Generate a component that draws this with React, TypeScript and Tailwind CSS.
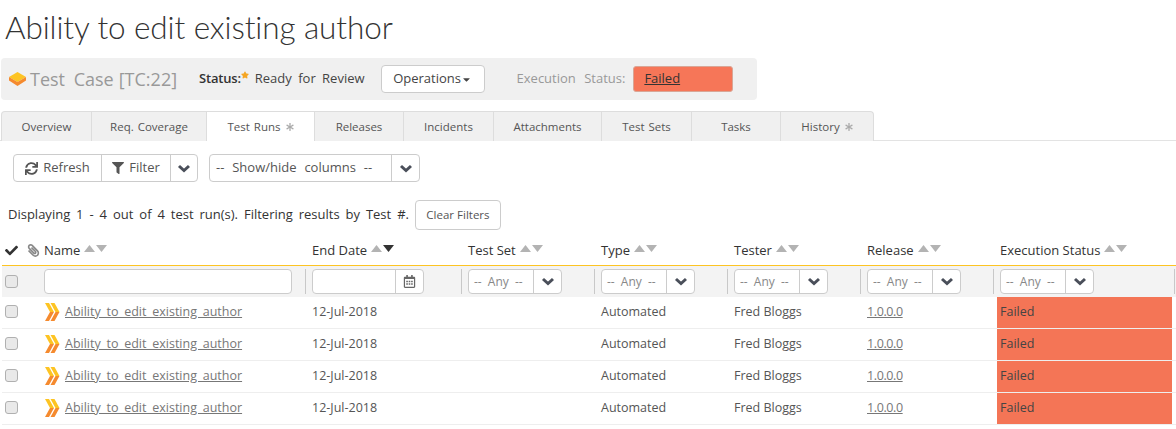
import React from "react";
import { FaSync, FaFilter, FaCheck, FaPaperclip, FaRegCalendarAlt, FaAsterisk, FaStar, FaCaretDown } from "react-icons/fa";

const tabs = [
  { label: "Overview", w: "w-[91px]" },
  { label: "Req. Coverage", w: "w-[115px]" },
  { label: "Test Runs", w: "w-[108px]", active: true, mark: true },
  { label: "Releases", w: "w-[89px]" },
  { label: "Incidents", w: "w-[90px]" },
  { label: "Attachments", w: "w-[108px]" },
  { label: "Test Sets", w: "w-[90px]" },
  { label: "Tasks", w: "w-[89px]" },
  { label: "History", w: "w-[93px]", mark: true },
];

const gridCols = "grid grid-cols-[22px_17px_268px_156px_133px_133px_133px_133px_175px_1fr]";

function SortArrows({ active }: { active?: boolean }) {
  return (
    <svg width="23" height="7" viewBox="0 0 23 7" className="ml-[4px] mb-[4px]">
      <path d="M0 7 L5.5 0 L11 7 Z" fill="#b3b3b3" />
      <path d="M12 0 L23 0 L17.5 7 Z" fill={active ? "#333333" : "#b3b3b3"} />
    </svg>
  );
}

function HeadCell({ label, active }: { label: string; active?: boolean }) {
  return (
    <div className="flex items-center pl-[3px] pt-[1px]">
      <span>{label}</span>
      <SortArrows active={active} />
    </div>
  );
}

function CheckBox() {
  return <div className="ml-[3px] w-[13px] h-[13px] rounded-[3px] border border-[#b0b0b0] bg-[#e9e9e9]" />;
}

function Chevron() {
  return (
    <svg width="14" height="9" viewBox="0 0 14 9">
      <path d="M2 2 L7 6.5 L12 2" fill="none" stroke="#4a4f5a" strokeWidth="3" />
    </svg>
  );
}

function AnySelect() {
  return (
    <div className="flex items-center h-full">
      <div className="-ml-[4px] mr-[6px] w-px h-[25px] bg-[#c8c8c8]" />
      <div className="flex w-[94px] h-[25px] bg-white border border-[#ccc] rounded-[4px] text-[12px] text-[#888]">
        <div className="flex-1 flex items-center pl-[5px] whitespace-nowrap [word-spacing:3px]">-- Any --</div>
        <div className="w-[28px] border-l border-[#ccc] flex items-center justify-center">
          <Chevron />
        </div>
      </div>
    </div>
  );
}

function ChevronIcon() {
  return (
    <svg width="15" height="18" viewBox="0 0 15 18" className="shrink-0">
      <path d="M0 0 H4 L9 9 H5 Z" fill="#fdc423" />
      <path d="M5.5 0 H9.5 L14.5 9 H10.5 Z" fill="#fdc423" />
      <path d="M5 9 H9 L4 18 H0 Z" fill="#f58a2e" />
      <path d="M10.5 9 H14.5 L9.5 18 H5.5 Z" fill="#f58a2e" />
    </svg>
  );
}

function RunRow() {
  return (
    <div className={`${gridCols} h-[32px] border-b border-[#eeeeee] items-stretch text-[#555] text-[12.5px] pb-[1px]`}>
      <div className="flex items-center -mt-[2px]"><CheckBox /></div>
      <div />
      <div className="flex items-center pl-[4px] gap-[5px]">
        <ChevronIcon />
        <a href="#" className="underline text-[#777] [word-spacing:2.5px]">Ability to edit existing author</a>
      </div>
      <div className="flex items-center pl-[3px]">12-Jul-2018</div>
      <div />
      <div className="flex items-center pl-[3px]">Automated</div>
      <div className="flex items-center pl-[3px]">Fred Bloggs</div>
      <div className="flex items-center pl-[3px]">
        <a href="#" className="underline text-[#777] tracking-[-0.4px]">1.0.0.0</a>
      </div>
      <div className="flex items-center pl-[3px] bg-[#f47556] text-[#444] -mb-[1px]">Failed</div>
      <div />
    </div>
  );
}

export default function App() {
  return (
    <div className="w-[1176px] h-[429px] overflow-hidden bg-white text-[13px] text-[#444] font-['Open_Sans',sans-serif]">
      <h1 className="pl-[5px] pt-[7px] h-[58px] text-[31.5px] leading-[40px] font-light text-[#333] font-['Lato',sans-serif] tracking-[-0.1px]">
        Ability to edit existing author
      </h1>

      {/* status bar */}
      <div className="ml-px w-[756px] h-[42px] bg-[#f0f0f0] rounded-[4px] flex items-center pl-[8px]">
        <svg width="17" height="14" viewBox="0 0 17 14">
          <path d="M8.5 0 L17 5 L8.5 10 L0 5 Z" fill="#fdc423" />
          <path d="M0 5 L8.5 10 L17 5 V8.5 L8.5 14 L0 8.5 Z" fill="#f58a2e" />
        </svg>
        <span className="ml-[4px] text-[18px] text-[#999] whitespace-nowrap [word-spacing:4px]">Test Case</span>
        <span className="ml-[5px] text-[18px] text-[#999] whitespace-nowrap">[TC:22]</span>
        <span className="ml-[22px] font-semibold text-[#333] tracking-[-0.2px]">Status:</span>
        <FaStar size={8} className="text-[#f5a623] mb-[8px]" />
        <span className="ml-[6px] [word-spacing:3px]">Ready for Review</span>
        <button className="ml-[16px] w-[104px] h-[28px] bg-white border border-[#ccc] rounded-[4px] flex items-center justify-center">
          Operations
          <FaCaretDown size={11} />
        </button>
        <span className="ml-[32px] text-[#999] whitespace-nowrap [word-spacing:5px]">Execution Status:</span>
        <div className="ml-[8px] w-[100px] h-[26px] bg-[#f67658] border border-[#d9a696] rounded-[3px] flex items-center pl-[10px]">
          <a href="#" className="underline text-[#333]">Failed</a>
        </div>
      </div>

      {/* tabs */}
      <div className="mt-[11px] h-[30px] border-b border-[#e3e3e3] pl-px flex text-[11.5px] [word-spacing:1px]">
        {tabs.map((t, i) => (
          <div
            key={t.label}
            className={`${t.w} h-[30px] flex items-center justify-center gap-[5px] border-t border-r border-[#dddddd] text-[#555] ${
              t.active ? "bg-white" : "bg-[#f0f0f0]"
            } ${i === 0 ? "border-l rounded-tl-[4px]" : ""} ${i === tabs.length - 1 ? "rounded-tr-[4px]" : ""}`}
          >
            {t.label}
            {t.mark && <FaAsterisk size={8} className="text-[#aaa]" />}
          </div>
        ))}
      </div>

      {/* toolbar */}
      <div className="mt-[13px] ml-[13px] flex gap-[11px] h-[28px]">
        <div className="flex w-[185px] border border-[#ccc] rounded-[4px] text-[#555]">
          <div className="w-[88px] flex items-center justify-center gap-[5px] border-r border-[#ccc]">
            <FaSync size={13} />
            Refresh
          </div>
          <div className="w-[69px] flex items-center justify-center gap-[5px] border-r border-[#ccc]">
            <FaFilter size={12} />
            Filter
          </div>
          <div className="flex-1 flex items-center justify-center">
            <Chevron />
          </div>
        </div>
        <div className="flex w-[211px] border border-[#ccc] rounded-[4px] text-[#555]">
          <div className="w-[182px] flex items-center pl-[6px] border-r border-[#ccc] whitespace-nowrap [word-spacing:4.5px]">-- Show/hide columns --</div>
          <div className="flex-1 flex items-center justify-center">
            <Chevron />
          </div>
        </div>
      </div>

      {/* result summary */}
      <div className="mt-[18px] pl-[8px] h-[30px] flex items-center text-[#333]">
        <span className="[word-spacing:2.55px]">Displaying 1 - 4 out of 4 test run(s). Filtering results by Test #.</span>
        <button className="ml-[6px] w-[86px] h-[30px] border border-[#ccc] rounded-[4px] text-[11.5px] text-[#555]">Clear Filters</button>
      </div>

      {/* table */}
      <div className="mt-[5px] ml-px pl-px">
        <div className={`${gridCols} h-[31px] border-b border-[#fdc423] items-center text-[#333]`}>
          <div className="pl-[3px]"><FaCheck size={13} /></div>
          <div className="pl-[3px] text-[#888]"><FaPaperclip size={13} className="-scale-x-100" /></div>
          <HeadCell label="Name" />
          <HeadCell label="End Date" active />
          <HeadCell label="Test Set" />
          <HeadCell label="Type" />
          <HeadCell label="Tester" />
          <HeadCell label="Release" />
          <HeadCell label="Execution Status" />
          <div />
        </div>
        <div className={`${gridCols} h-[31px] bg-[#f3f3f3] items-center`}>
          <div className="flex items-center"><CheckBox /></div>
          <div />
          <div className="pl-[3px]">
            <div className="w-[248px] h-[25px] bg-white border border-[#ccc] rounded-[4px]" />
          </div>
          <div className="flex items-center h-full">
            <div className="-ml-[4px] mr-[6px] w-px h-[25px] bg-[#c8c8c8]" />
            <div className="flex w-[112px] h-[25px] bg-white border border-[#ccc] rounded-[4px]">
              <div className="flex-1" />
              <div className="w-[28px] border-l border-[#ccc] flex items-center justify-center text-[#666]">
                <FaRegCalendarAlt size={13} />
              </div>
            </div>
          </div>
          <AnySelect />
          <AnySelect />
          <AnySelect />
          <AnySelect />
          <AnySelect />
          <div className="flex items-center h-full">
            <div className="ml-[2px] w-px h-[25px] bg-[#c8c8c8]" />
          </div>
        </div>
        <RunRow />
        <RunRow />
        <RunRow />
        <RunRow />
      </div>
    </div>
  );
}
